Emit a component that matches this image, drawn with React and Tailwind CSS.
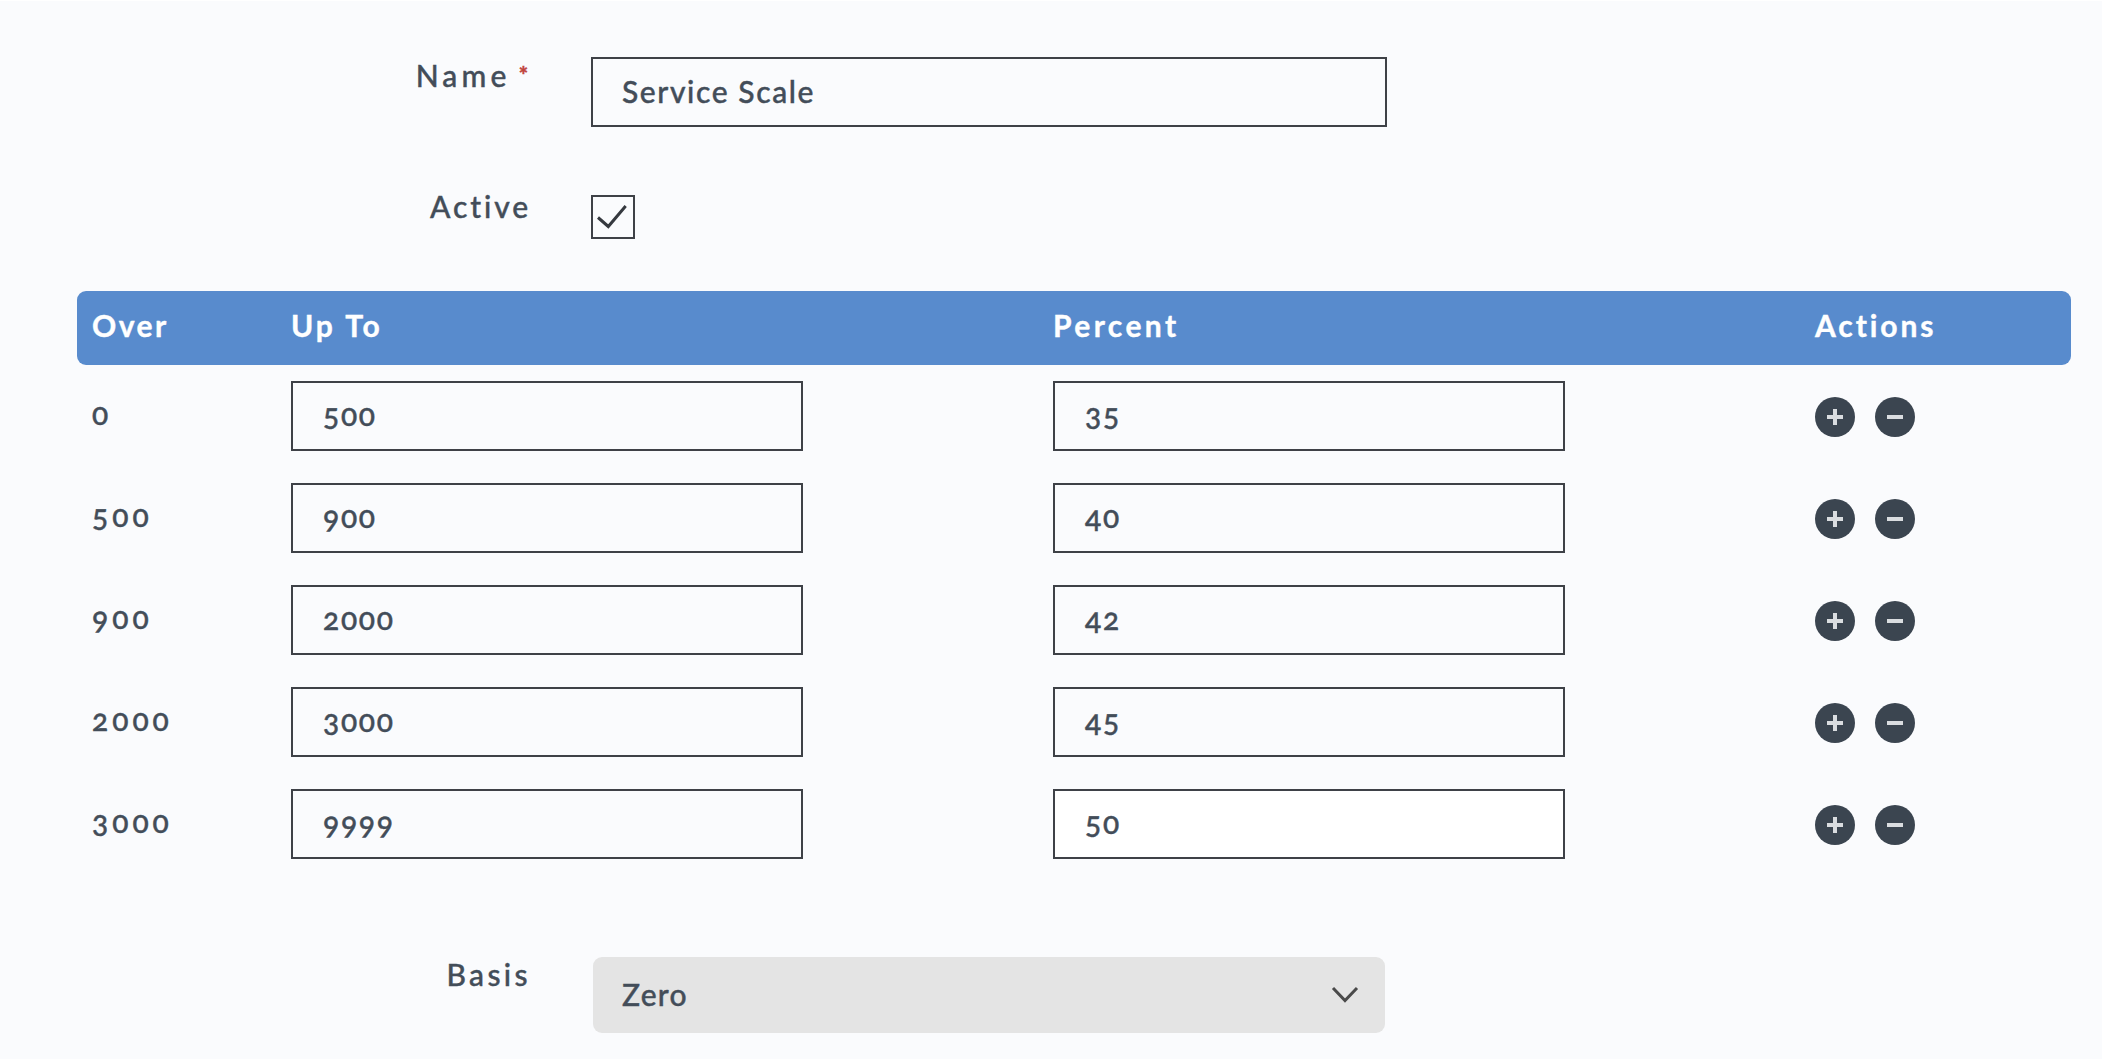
import React, { useState } from 'react';
import clsx from 'clsx';

const initialTiers = [
  { over: '0', upTo: '500', percent: '35' },
  { over: '500', upTo: '900', percent: '40' },
  { over: '900', upTo: '2000', percent: '42' },
  { over: '2000', upTo: '3000', percent: '45' },
  { over: '3000', upTo: '9999', percent: '50' },
];

function FieldLabel({ children, required, className }) {
  return (
    <div className={clsx('flex w-[531px] shrink-0 justify-end text-[30px] leading-9 font-medium whitespace-nowrap', className)}>
      {children}
      {required && <span className="mr-[3px] ml-2 text-[22px] leading-9 font-black tracking-normal text-[#c0443b]">*</span>}
    </div>
  );
}

function NumberBox({ value, active }) {
  return (
    <div className={clsx('flex h-[70px] w-[512px] items-center border-2 border-[#3e4147] pb-1 pl-[30px] text-[30px] leading-9 font-medium tracking-[1.7px] oldstyle-nums', active && 'bg-white')}>
      {value}
    </div>
  );
}

function CircleButton({ minus, onClick }) {
  return (
    <button type="button" onClick={onClick} className="h-10 w-10">
      <svg viewBox="0 0 40 40" className="h-10 w-10">
        <circle cx="20" cy="20" r="20" fill="#3b4550" />
        <path d={minus ? 'M12 20h16' : 'M12 20h16M20 12v16'} stroke="#dadde0" strokeWidth="4" />
      </svg>
    </button>
  );
}

export default function App() {
  const [tiers, setTiers] = useState(initialTiers);

  const addTier = (index) => {
    const next = [...tiers];
    next.splice(index + 1, 0, { over: tiers[index].upTo, upTo: '', percent: '' });
    setTiers(next);
  };

  const removeTier = (index) => {
    setTiers(tiers.filter((_, i) => i !== index));
  };

  return (
    <div className="h-[1059px] w-[2103px] overflow-hidden border-t border-r border-white bg-[#fafbfd] font-['Lato',sans-serif] text-[#434d59] [-webkit-text-stroke:0.4px]">
      {/* Name */}
      <div className="flex items-start pt-14">
        <FieldLabel required className="tracking-[4.2px]">Name</FieldLabel>
        <div className="ml-[60px] flex h-[70px] w-[796px] items-center border-2 border-[#3e4147] pb-0.5 pl-[29px] text-[30px] leading-9 font-medium tracking-[1.6px]">
          Service Scale
        </div>
      </div>

      {/* Active */}
      <div className="flex items-start pt-[61px]">
        <FieldLabel className="tracking-[2.9px]">Active</FieldLabel>
        <div className="mt-[7px] ml-[60px] h-11 w-11 border-2 border-[#3e4147]">
          <svg viewBox="0 0 40 40" className="h-10 w-10" fill="none" stroke="#35393f" strokeWidth="3">
            <path d="M5 20.5L15.3 29.5L32.7 9" />
          </svg>
        </div>
      </div>

      {/* Tiers */}
      <div className="mt-[52px] ml-[77px] w-[1994px]">
        <div className="grid h-[74px] grid-cols-[199px_762px_762px_1fr] rounded-[9px] bg-[#588bcd] pt-4 pl-[15px] text-[30px] leading-9 font-bold text-white">
          <div className="tracking-[2.5px]">Over</div>
          <div className="tracking-[3px]">Up To</div>
          <div className="tracking-[3.4px]">Percent</div>
          <div className="tracking-[2.9px]">Actions</div>
        </div>
        {tiers.map((tier, index) => (
          <div key={index} className="grid h-[102px] grid-cols-[199px_762px_762px_1fr] pt-4 pl-[15px]">
            <div className="pt-3.5 text-[30px] leading-9 font-medium tracking-[4px] oldstyle-nums">{tier.over}</div>
            <NumberBox value={tier.upTo} />
            <NumberBox value={tier.percent} active={index === 4} />
            <div className="flex gap-5 pt-4">
              <CircleButton onClick={() => addTier(index)} />
              <CircleButton minus onClick={() => removeTier(index)} />
            </div>
          </div>
        ))}
      </div>

      {/* Basis */}
      <div className="flex items-start pt-[81px]">
        <FieldLabel className="tracking-[3.4px]">Basis</FieldLabel>
        <div className="mt-px ml-[62px] flex h-[76px] w-[792px] items-center justify-between rounded-[9px] bg-[#e4e4e4] pr-[26px] pl-[29px] text-[30px] leading-9 font-medium">
          <span className="pb-0.5 tracking-[1.3px]">Zero</span>
          <svg viewBox="0 0 28 18" className="h-[18px] w-7" fill="none" stroke="#4a4a4a" strokeWidth="3">
            <path d="M2 2L14 14.5L26 2" />
          </svg>
        </div>
      </div>
    </div>
  );
}
